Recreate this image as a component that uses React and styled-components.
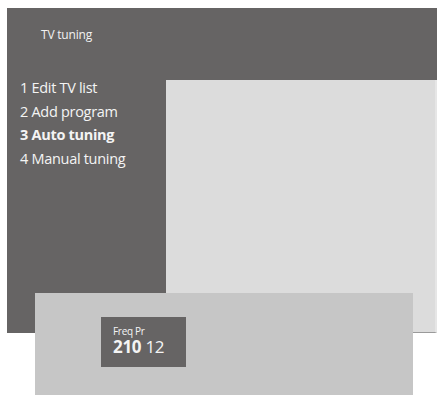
import React from 'react';
import styled, { createGlobalStyle } from 'styled-components';

const GlobalStyle = createGlobalStyle`
  html, body {
    margin: 0;
    padding: 0;
    background: #ffffff;
    font-family: 'Open Sans', 'Noto Sans', sans-serif;
  }
`;

const Page = styled.div`
  width: 445px;
  height: 401px;
  padding: 8px 0 0 7px;
  box-sizing: border-box;
`;

const Screen = styled.div`
  width: 430px;
  height: 325px;
  display: flex;
  flex-direction: column;
  background-color: #666464;
`;

const Header = styled.div`
  height: 72px;
  padding: 18px 0 0 34px;
  box-sizing: border-box;
  color: #f2f2f2;
  font-size: 12px;
  letter-spacing: -0.2px;
`;

const Body = styled.div`
  flex: 1;
  display: flex;
`;

const Menu = styled.ul`
  width: 159px;
  margin: -4px 0 0 0;
  padding: 0 0 0 13px;
  list-style: none;
  box-sizing: border-box;
`;

const MenuItem = styled.li`
  height: 23.5px;
  line-height: 23.5px;
  font-size: 14.5px;
  letter-spacing: -0.3px;
  color: #f4f4f4;
  font-weight: ${(p) => (p.$active ? 700 : 400)};
`;

const Pane = styled.div`
  flex: 1;
  background-color: #dcdcdc;
  border-right: 2px solid #e6e6e6;
  border-bottom: 1px solid #9a9a9a;
`;

const Bar = styled.div`
  width: 378px;
  height: 102px;
  margin: -40px 0 0 28px;
  padding: 24px 0 0 66px;
  box-sizing: border-box;
  background-color: #c6c6c6;
  position: relative;
`;

const Readout = styled.div`
  width: 85px;
  height: 50px;
  padding: 8px 0 0 12px;
  box-sizing: border-box;
  background-color: #666464;
  color: #f4f4f4;
`;

const Label = styled.div`
  font-size: 10px;
  line-height: 12px;
  letter-spacing: -0.3px;
`;

const Value = styled.div`
  font-size: 17px;
  line-height: 19px;
  letter-spacing: -0.3px;
  b {
    font-weight: 700;
  }
`;

const items = ['1 Edit TV list', '2 Add program', '3 Auto tuning', '4 Manual tuning'];

export default function App() {
  return (
    <>
      <GlobalStyle />
      <Page>
        <Screen>
          <Header>TV tuning</Header>
          <Body>
            <Menu>
              {items.map((t, i) => (
                <MenuItem key={t} $active={i === 2}>
                  {t}
                </MenuItem>
              ))}
            </Menu>
            <Pane />
          </Body>
        </Screen>
        <Bar>
          <Readout>
            <Label>Freq Pr</Label>
            <Value>
              <b>210</b> 12
            </Value>
          </Readout>
        </Bar>
      </Page>
    </>
  );
}
